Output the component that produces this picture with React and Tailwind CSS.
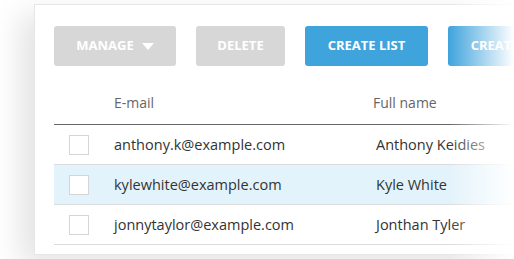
import React from 'react';

const rows = [
  { email: 'anthony.k@example.com', name: 'Anthony Keidies', active: false },
  { email: 'kylewhite@example.com', name: 'Kyle White', active: true },
  { email: 'jonnytaylor@example.com', name: 'Jonthan Tyler', active: false },
];

const App = () => {
  return (
    <div className="relative w-[514px] h-[259px] overflow-hidden bg-white font-['Open_Sans',sans-serif]">
      {/* card */}
      <div className="ml-[34px] mt-[4px] w-[520px] h-[251px] bg-white border border-[#e6e6e6] shadow-[-14px_10px_28px_rgba(0,0,0,0.11)] pl-[19px] pt-[21px]">
        <div className="flex gap-[20px]">
          <button className="shrink-0 w-[122px] h-[40px] rounded-[3px] bg-[#d7d7d7] text-white text-[13px] font-bold flex items-center justify-center gap-[8px]">
            MANAGE
            <svg width="12" height="7" viewBox="0 0 12 7"><path d="M0 0h12L6 7z" fill="#fff" /></svg>
          </button>
          <button className="shrink-0 w-[89px] h-[40px] rounded-[3px] bg-[#d7d7d7] text-white text-[13px] font-bold">
            DELETE
          </button>
          <button className="shrink-0 w-[123px] h-[40px] rounded-[3px] bg-[#3fa3dc] text-white text-[13px] font-bold">
            CREATE LIST
          </button>
          <button className="shrink-0 w-[123px] h-[40px] rounded-[3px] bg-[#3fa3dc] text-white text-[13px] font-bold">
            CREATE LIST
          </button>
        </div>

        <div className="w-[500px] mt-[26px]">
          <div className="flex h-[33px] border-b border-[#666] text-[14px] text-[#666]">
            <div className="w-[60px]" />
            <div className="w-[259px]">E-mail</div>
            <div>Full name</div>
          </div>
          {rows.map((r) => (
            <div
              key={r.email}
              className={`flex items-center h-[40px] border-b border-[#dcdcdc] text-[14.5px] text-[#333] ${r.active ? 'bg-[#e3f3fb]' : ''}`}
            >
              <div className="w-[60px] pl-[15px]">
                <div className="w-[20px] h-[20px] border border-[#d5d5d5] bg-white" />
              </div>
              <div className="w-[262px]">{r.email}</div>
              <div>{r.name}</div>
            </div>
          ))}
        </div>
      </div>

      {/* right edge fade */}
      <div className="absolute top-0 right-0 w-[66px] h-full bg-gradient-to-r from-white/0 to-white" />
    </div>
  );
};

export default App;
